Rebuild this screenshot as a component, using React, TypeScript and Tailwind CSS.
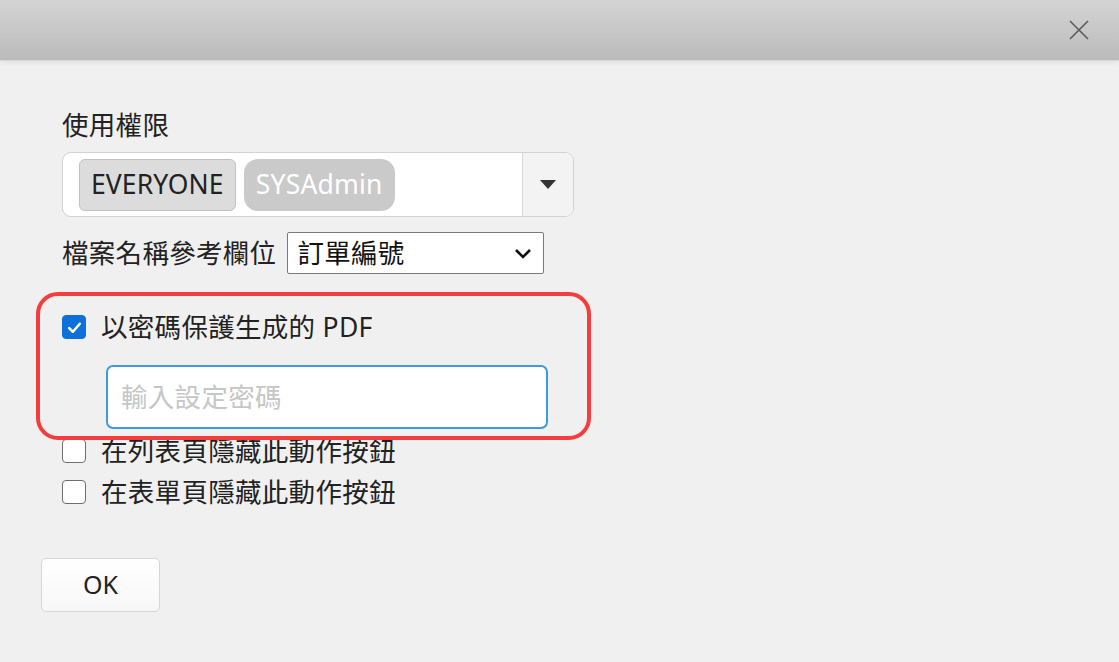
import React, { useState } from 'react';

const FONT = "font-['Noto_Sans','Noto_Sans_CJK_TC',sans-serif]";

const CheckRow: React.FC<{ checked: boolean; onToggle: () => void; label: string }> = ({ checked, onToggle, label }) => (
    <label className="flex items-center h-[36px] gap-[15px] cursor-pointer select-none">
        <span
            onClick={onToggle}
            className={`w-[24px] h-[24px] rounded-[4px] flex items-center justify-center shrink-0 ${checked ? 'bg-[#0d6fd8] border border-[#0d6fd8]' : 'bg-white border-[1.5px] border-[#6f6f6f]'}`}
        >
            {checked && (
                <svg width="17" height="17" viewBox="0 0 16 16">
                    <path d="M3 8.5 L6.5 12 L13 4.5" fill="none" stroke="white" strokeWidth="2.4" strokeLinecap="round" strokeLinejoin="round" />
                </svg>
            )}
        </span>
        <span className="text-[26.5px] leading-[36px] tracking-[0.3px] text-[#222]">{label}</span>
    </label>
);

export default function App() {
    const [protect, setProtect] = useState(true);
    const [hideList, setHideList] = useState(false);
    const [hideForm, setHideForm] = useState(false);
    const [password, setPassword] = useState('');

    return (
        <div className={`relative w-[1119px] h-[662px] overflow-hidden bg-[#f0f0f0] ${FONT}`}>
            {/* title bar */}
            <div className="h-[61px] flex items-center justify-end pr-[29px] bg-gradient-to-b from-[#d4d4d4] to-[#bbbbbb] border-b border-[#d9d9d9] shadow-[0_2px_4px_rgba(0,0,0,0.06)]">
                <button className="w-[22px] h-[22px] flex items-center justify-center">
                    <svg width="20" height="20" viewBox="0 0 20 20">
                        <path d="M1 1 L19 19 M19 1 L1 19" stroke="#5a5a5a" strokeWidth="1.6" fill="none" />
                    </svg>
                </button>
            </div>

            {/* body */}
            <div className="flex flex-col pl-[41px] pt-[46px]">
                <div className="flex flex-col pl-[21px]">
                    <div className="text-[26.5px] leading-[36px] tracking-[0.3px] text-[#222]">使用權限</div>

                    {/* multi select */}
                    <div className="mt-[9px] w-[512px] h-[65px] flex bg-white border border-[#d2d2d2] rounded-[9px] overflow-hidden">
                        <div className="flex-1 flex items-center gap-[8px] pl-[16px]">
                            <span className="h-[52px] px-[11px] flex items-center bg-[#dcdcdc] border border-[#c2c2c2] rounded-[6px] text-[26.5px] tracking-[0.1px] text-[#222]">EVERYONE</span>
                            <span className="h-[52px] px-[12px] flex items-center bg-[#cacaca] rounded-[14px] text-[26.5px] tracking-[0.2px] text-white">SYSAdmin</span>
                        </div>
                        <div className="w-[51px] flex items-center justify-center bg-[#f3f3f3] border-l border-[#d6d6d6]">
                            <svg width="16" height="9" viewBox="0 0 16 9">
                                <path d="M0 0 H16 L8 9 Z" fill="#333" />
                            </svg>
                        </div>
                    </div>

                    {/* file name field */}
                    <div className="mt-[15px] flex items-center gap-[11px]">
                        <span className="text-[26.5px] leading-[36px] tracking-[0.3px] text-[#222]">檔案名稱參考欄位</span>
                        <div className="w-[257px] h-[42px] flex items-center justify-between pl-[9px] pr-[11px] bg-white border border-[#7a7a7a] rounded-[2px]">
                            <span className="text-[26.5px] leading-[36px] tracking-[0.3px] text-[#111]">訂單編號</span>
                            <svg width="18" height="12" viewBox="0 0 18 12">
                                <path d="M2 3 L9 10 L16 3" fill="none" stroke="#111" strokeWidth="2.6" />
                            </svg>
                        </div>
                    </div>

                    <div className="mt-[35px]">
                        <CheckRow checked={protect} onToggle={() => setProtect(!protect)} label="以密碼保護生成的 PDF" />
                    </div>

                    <input
                        value={password}
                        onChange={e => setPassword(e.target.value)}
                        placeholder="輸入設定密碼"
                        className="mt-[20px] ml-[44px] w-[442px] h-[64px] px-[13px] bg-white border-2 border-[#3c9bdc] rounded-[7px] text-[26.5px] tracking-[0.3px] text-[#222] placeholder:text-[#c6c6c6] outline-none"
                    />

                    <div className="mt-[4px]">
                        <CheckRow checked={hideList} onToggle={() => setHideList(!hideList)} label="在列表頁隱藏此動作按鈕" />
                    </div>
                    <div className="mt-[5px]">
                        <CheckRow checked={hideForm} onToggle={() => setHideForm(!hideForm)} label="在表單頁隱藏此動作按鈕" />
                    </div>
                </div>

                <button className="mt-[48px] w-[119px] h-[54px] flex items-center justify-center bg-gradient-to-b from-white to-[#f7f7f7] border border-[#d6d6d6] rounded-[5px] text-[25px] text-[#222]">
                    OK
                </button>
            </div>

            {/* red highlight annotation */}
            <div className="absolute left-[36px] top-[292px] w-[555px] h-[148px] border-[4px] border-[#f53d3d] rounded-[22px] pointer-events-none" />
        </div>
    );
}
